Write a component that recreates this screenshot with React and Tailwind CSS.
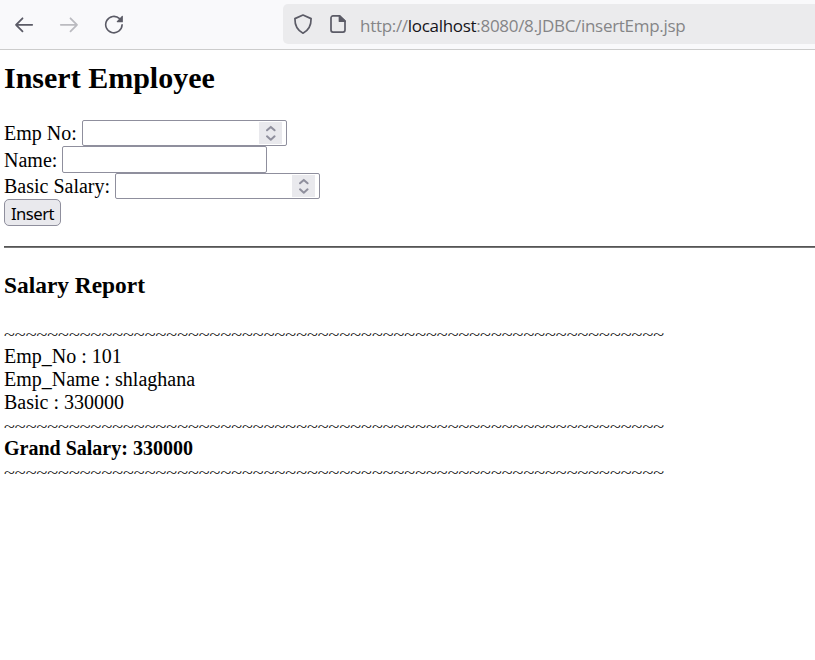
const TILDES = '~'.repeat(61);

function Divider() {
  return <p className="translate-y-[2px] scale-y-[0.7]">{TILDES}</p>;
}

function Spinner() {
  return (
    <span className="flex h-[22px] w-[23px] items-center justify-center bg-[#e9e9ed]">
      <svg width="12" height="18" viewBox="0 0 12 18" fill="none" stroke="#8f8f9d" strokeWidth="2" strokeLinecap="round" strokeLinejoin="round">
        <path d="M2 6.3 5.8 2.9l3.8 3.4M2 12.3l3.8 3.4 3.8-3.4" />
      </svg>
    </span>
  );
}

function Field({ label, width, box, numeric }) {
  return (
    <div className={`flex ${box}`}>
      <label className={`${width} shrink-0 whitespace-nowrap leading-[23px]`}>{label}</label>
      <div className="flex h-full w-[205px] items-center justify-end rounded-[2px] border border-[#8f8f9d] bg-white pr-1">
        {numeric && <Spinner />}
      </div>
    </div>
  );
}

function Toolbar() {
  return (
    <header className="flex h-[50px] items-start border-b border-[#cccccc] bg-[#f9f9fb]">
      <nav className="flex h-[49px] w-[283px] shrink-0 items-center pl-[14px]">
        <svg width="20" height="20" viewBox="0 0 20 20" fill="none" stroke="#5b5b66" strokeWidth="1.8" strokeLinecap="round" strokeLinejoin="round">
          <path d="M18.2 9.8H2M8.5 3.3 2 9.8l6.5 6.5" />
        </svg>
        <svg className="ml-[25px]" width="20" height="20" viewBox="0 0 20 20" fill="none" stroke="#bbbbc0" strokeWidth="1.8" strokeLinecap="round" strokeLinejoin="round">
          <path d="M1.8 9.8H18M11.5 3.3 18 9.8l-6.5 6.5" />
        </svg>
        <svg className="ml-[25px]" width="20" height="20" viewBox="0 0 20 20" fill="none" stroke="#5b5b66" strokeWidth="1.6" strokeLinecap="round">
          <path d="M15.6 3.7A8.2 8.2 0 1 0 18.1 9.8" />
          <path d="M18.9 1v6.3h-5.6q-1-.2-.4-1L17.9 1q.6-.5 1 0z" fill="#5b5b66" stroke="none" />
        </svg>
      </nav>
      <div className="mt-1 flex h-10 flex-1 items-center rounded-l-[5px] bg-[#ebebed] pl-[10px]">
        <svg width="20" height="22" viewBox="0 0 20 22" fill="none" stroke="#5b5b66" strokeWidth="1.7" strokeLinejoin="round">
          <path d="M10 2 18.1 5.6c.1 6.2-1.9 11.6-8.1 14.6C3.8 17.2 1.8 11.8 1.9 5.6z" />
        </svg>
        <svg className="ml-[16px]" width="18" height="20" viewBox="0 0 18 20" fill="none" stroke="#5b5b66" strokeWidth="1.7" strokeLinejoin="round">
          <path d="M10.5 1.9H4a2 2 0 0 0-2 2v12.2a2 2 0 0 0 2 2h10a2 2 0 0 0 2-2V7.2z" />
          <path d="M10.5 1.9v5.3H16z" fill="#5b5b66" />
        </svg>
        <span className="ml-[13px] mt-[4px] whitespace-nowrap font-['Open_Sans','Noto_Sans',sans-serif] text-[17px] leading-6 tracking-[-0.3px] text-[#858587]">
          http://<span className="text-[#15141a]">localhost</span>:8080/8.JDBC/insertEmp.jsp
        </span>
      </div>
    </header>
  );
}

export default function App() {
  return (
    <div className="h-[660px] w-full overflow-hidden bg-white font-['Liberation_Serif',serif] text-[20px] leading-[23px] text-black">
      <Toolbar />
      <main className="pl-1">
        <h2 className="pt-[11px] text-[30px] font-bold leading-[34px]">Insert Employee</h2>
        <form className="pt-[25px]">
          <Field label="Emp No:" width="w-[78px] pt-[2px]" box="h-[26px]" numeric />
          <Field label="Name:" width="w-[58px] pt-[3px]" box="h-[27px]" />
          <Field label="Basic Salary:" width="w-[111px] pt-[2px]" box="h-[26px]" numeric />
          <button type="button" className="flex h-[27px] w-[57px] items-center justify-center rounded-[5px] border border-[#8f8f9d] bg-[#e9e9ed] pt-[2px] font-['Noto_Sans',sans-serif] text-[16.67px] tracking-[-0.5px]">
            Insert
          </button>
        </form>
        <hr className="mt-5 h-[2px] border-0 border-t border-[#555555] bg-[#777777]" />
        <h3 className="pt-[24px] text-[23.4px] font-bold leading-[27px]">Salary Report</h3>
        <section className="whitespace-nowrap pt-[23px]">
          <Divider />
          <p>Emp_No : 101</p>
          <p>Emp_Name : shlaghana</p>
          <p>Basic : 330000</p>
          <Divider />
          <p className="font-bold">Grand Salary: 330000</p>
          <Divider />
        </section>
      </main>
    </div>
  );
}
